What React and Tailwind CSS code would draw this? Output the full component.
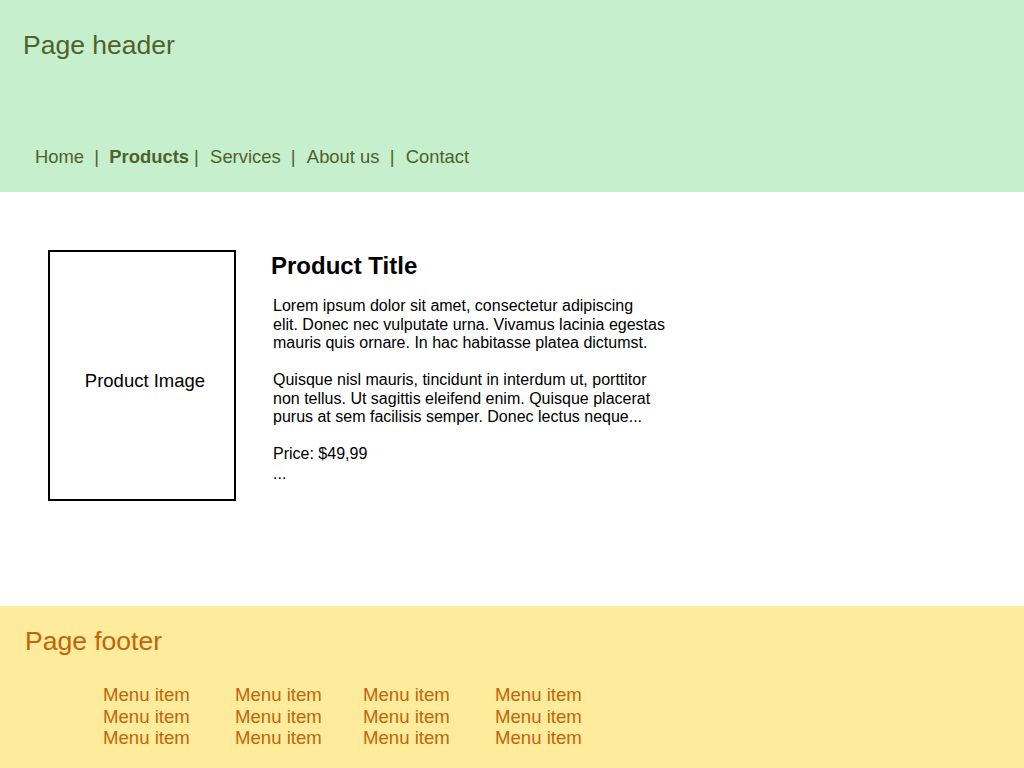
import React from "react";

const navItems = [
  { label: "Home", sep: "  |  " },
  { label: "Products", sep: " |  ", active: true },
  { label: "Services", sep: "  |  ", nudge: true },
  { label: "About us", sep: "  |  ", nudge: true },
  { label: "Contact", sep: "", nudge: true },
];

const footerCols = [
  "w-[132px]",
  "w-[128px]",
  "w-[132px]",
  "w-[132px]",
];

export default function App() {
  return (
    <div
      className="flex min-h-[768px] w-full flex-col bg-white"
      style={{ fontFamily: '"Liberation Sans", Arial, sans-serif' }}
    >
      {/* header */}
      <header className="flex h-[192px] flex-col bg-[#c6efce] text-[#4f6228]">
        <h1 className="pl-[23px] pt-[29px] text-[26.5px] leading-[32px]">
          Page header
        </h1>
        <nav className="mt-auto mb-[24px] whitespace-pre pl-[35px] text-[18.4px] leading-[22px]">
          {navItems.map((n) => (
            <span key={n.label}>
              <span
                className={
                  (n.active ? "font-bold" : "") + (n.nudge ? " ml-[1px]" : "")
                }
              >
                {n.label}
              </span>
              {n.sep}
            </span>
          ))}
        </nav>
      </header>

      {/* product */}
      <main className="flex h-[414px] gap-[35px] pl-[48px] pt-[58px] text-black">
        <div className="flex h-[251px] w-[188px] shrink-0 items-center justify-center border-2 border-black pl-[6px] pt-[10px] text-[18.5px]">
          Product Image
        </div>
        <div className="w-[420px] pt-[1px]">
          <h2 className="text-[24px] font-bold leading-[30px]">
            Product Title
          </h2>
          <div className="mt-[16px] pl-[2px] text-[16px] leading-[18.5px]">
            <p>
              Lorem ipsum dolor sit amet, consectetur adipiscing
              <br />
              elit. Donec nec vulputate urna. Vivamus lacinia egestas
              <br />
              mauris quis ornare. In hac habitasse platea dictumst.
            </p>
            <p className="mt-[18.5px]">
              Quisque nisl mauris, tincidunt in interdum ut, porttitor
              <br />
              non tellus. Ut sagittis eleifend enim. Quisque placerat
              <br />
              purus at sem facilisis semper. Donec lectus neque...
            </p>
            <p className="mt-[18.5px] leading-[18.5px]">Price: $49,99</p>
            <p className="leading-[19px]">...</p>
          </div>
        </div>
      </main>

      {/* footer */}
      <footer className="flex-1 bg-[#ffeb9c] text-[#bf650a]">
        <h3 className="pl-[25px] pt-[19px] text-[26.5px] leading-[32px]">
          Page footer
        </h3>
        <div className="mt-[27px] flex pl-[103px] text-[18.6px] leading-[21.5px]">
          {footerCols.map((w, i) => (
            <ul key={i} className={w}>
              <li>Menu item</li>
              <li>Menu item</li>
              <li>Menu item</li>
            </ul>
          ))}
        </div>
      </footer>
    </div>
  );
}
